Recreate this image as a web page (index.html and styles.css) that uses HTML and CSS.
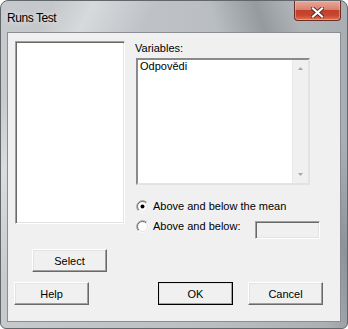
FILE: index.html
```html
<!DOCTYPE html>
<html lang="cs">
<head>
    <meta charset="UTF-8">
    <title>Runs Test</title>
    <link rel="stylesheet" href="styles.css">
</head>
<body>
    <div class="window">
        <div class="titlebar">
            <span class="title">Runs Test</span>
            <div class="close-btn">
                <svg width="13" height="11" viewBox="0 0 13 11">
                    <path d="M2 1.5 L11 9.5 M11 1.5 L2 9.5" stroke="#5a2a24" stroke-width="4" stroke-linecap="square"/>
                    <path d="M2 1.5 L11 9.5 M11 1.5 L2 9.5" stroke="#ffffff" stroke-width="2.2" stroke-linecap="square"/>
                </svg>
            </div>
        </div>

        <div class="client">
            <div class="main">
                <!-- column list + select -->
                <div class="left-col">
                    <div class="sunken columns-list"></div>
                    <div class="btn btn-select">Select</div>
                </div>

                <div class="right-col">
                    <div class="label">Variables:</div>
                    <div class="sunken vars-box">
                        <div class="vars-items">
                            <div class="item">Odpovědi</div>
                        </div>
                        <div class="scrollbar">
                            <svg width="5" height="3" viewBox="0 0 5 3"><path d="M0 3 L2.5 0 L5 3 Z" fill="#a8a8a8"/></svg>
                            <svg width="5" height="3" viewBox="0 0 5 3"><path d="M0 0 L2.5 3 L5 0 Z" fill="#a8a8a8"/></svg>
                        </div>
                    </div>

                    <div class="radio-row first">
                        <svg class="radio" width="13" height="13" viewBox="0 0 13 13">
                            <circle cx="6.5" cy="6.5" r="5" fill="#fff"/>
                            <path d="M2.26 10.74 A6 6 0 0 1 10.74 2.26" stroke="#a0a0a0" fill="none"/>
                            <path d="M10.74 2.26 A6 6 0 0 1 2.26 10.74" stroke="#ffffff" fill="none"/>
                            <path d="M2.96 10.04 A5 5 0 0 1 10.04 2.96" stroke="#696969" fill="none"/>
                            <path d="M10.04 2.96 A5 5 0 0 1 2.96 10.04" stroke="#e3e3e3" fill="none"/>
                            <circle cx="6.5" cy="6.5" r="2" fill="#000"/>
                        </svg>
                        <span>Above and below the mean</span>
                    </div>
                    <div class="radio-row second">
                        <svg class="radio" width="13" height="13" viewBox="0 0 13 13">
                            <circle cx="6.5" cy="6.5" r="5" fill="#fff"/>
                            <path d="M2.26 10.74 A6 6 0 0 1 10.74 2.26" stroke="#a0a0a0" fill="none"/>
                            <path d="M10.74 2.26 A6 6 0 0 1 2.26 10.74" stroke="#ffffff" fill="none"/>
                            <path d="M2.96 10.04 A5 5 0 0 1 10.04 2.96" stroke="#696969" fill="none"/>
                            <path d="M10.04 2.96 A5 5 0 0 1 2.96 10.04" stroke="#e3e3e3" fill="none"/>
                        </svg>
                        <span>Above and below:</span>
                        <div class="sunken value-box"></div>
                    </div>
                </div>
            </div>

            <div class="btn-row">
                <div class="btn">Help</div>
                <div class="btn btn-default btn-ok">OK</div>
                <div class="btn btn-cancel">Cancel</div>
            </div>
        </div>
    </div>
</body>
</html>
```

FILE: styles.css
```css
body {
    margin: 0;
    background-color: #ffffff;
    font-family: "Liberation Sans", Arial, sans-serif;
    font-size: 11px;
    color: #000;
}
.window {
    width: 348px;
    height: 329px;
    box-sizing: border-box;
    border: 1px solid #62676b;
    border-radius: 8px 8px 6px 6px;
    padding: 0 6px 6px;
    display: flex;
    flex-direction: column;
    background:
        linear-gradient(118deg, rgba(255,255,255,0) 10%, rgba(255,255,255,0.35) 18%, rgba(255,255,255,0) 30%),
        linear-gradient(70deg, rgba(0,0,0,0) 70%, rgba(60,65,70,0.25) 80%, rgba(0,0,0,0) 88%),
        linear-gradient(to right, #c6cacd, #bcc0c4 55%, #a9aeb3);
}
.titlebar {
    height: 31px;
    display: flex;
    justify-content: space-between;
    align-items: flex-start;
}
.title {
    margin-top: 10px;
    padding-left: 0;
    font-size: 12px;
    line-height: 14px;
    letter-spacing: -0.45px;
    text-shadow: 0 0 6px rgba(255,255,255,0.9);
}
.close-btn {
    width: 47px;
    height: 20px;
    margin-right: 0;
    box-sizing: border-box;
    border: 1px solid #6b2d25;
    border-top: none;
    border-radius: 0 0 4px 4px;
    display: flex;
    align-items: center;
    justify-content: center;
    padding-top: 3px;
    box-shadow: inset 0 0 0 1px rgba(255,200,190,0.45);
    background: linear-gradient(to bottom, #e7a99b 0%, #d9816f 45%, #c0402c 50%, #c9452e 75%, #e27450 100%);
}
.client {
    height: 290px;
    box-sizing: border-box;
    border: 1px solid #8a8e92;
    background-color: #f0f0f0;
}
.main {
    display: flex;
    align-items: flex-start;
}
.left-col {
    width: 117px;
    box-sizing: border-box;
    padding: 8px 0 0 7px;
}
.sunken {
    box-sizing: border-box;
    background-color: #fff;
    border: 1px solid;
    border-color: #a0a0a0 #ffffff #ffffff #a0a0a0;
    box-shadow: inset 1px 1px 0 #696969, inset -1px -1px 0 #e3e3e3;
}
.columns-list {
    width: 110px;
    height: 183px;
}
.btn {
    width: 75px;
    height: 23px;
    box-sizing: border-box;
    display: flex;
    align-items: center;
    justify-content: center;
    background-color: #f0f0f0;
    border: 1px solid;
    border-color: #ffffff #696969 #696969 #ffffff;
    box-shadow: inset -1px -1px 0 #a0a0a0, inset 1px 1px 0 #e3e3e3;
}
.btn-select {
    margin: 25px 0 0 17px;
}
.right-col {
    padding-left: 10px;
}
.label {
    margin-top: 9px;
    line-height: 13px;
}
.vars-box {
    width: 174px;
    height: 127px;
    margin: 3px 0 0 1px;
    border-width: 2px;
    display: flex;
    box-shadow: none;
    border-color: #8a8a8a #e3e3e3 #e3e3e3 #8a8a8a;
}
.vars-items {
    flex: 1;
    padding: 0 2px;
    line-height: 13px;
}
.scrollbar {
    width: 15px;
    background-color: #f0f0f0;
    border-left: 1px solid #e8e8e8;
    display: flex;
    flex-direction: column;
    justify-content: space-between;
    align-items: center;
    padding: 7px 0 7px;
}
.radio-row {
    display: flex;
    align-items: flex-start;
    margin-left: 1px;
    line-height: 13px;
}
.radio-row.first {
    margin-top: 15px;
}
.radio-row.second {
    margin-top: 7px;
}
.radio {
    margin: 0 4px 0 0;
    flex-shrink: 0;
}
.value-box {
    width: 65px;
    height: 18px;
    margin: 1px 0 0 15px;
    background-color: #f0f0f0;
}
.btn-row {
    display: flex;
    padding: 10px 0 0 6px;
}
.btn-ok {
    margin-left: 69px;
}
.btn-cancel {
    margin-left: 15px;
}
.btn-default {
    outline: 1px solid #000;
    outline-offset: -1px;
    border-color: #ffffff #696969 #696969 #ffffff;
}
```
